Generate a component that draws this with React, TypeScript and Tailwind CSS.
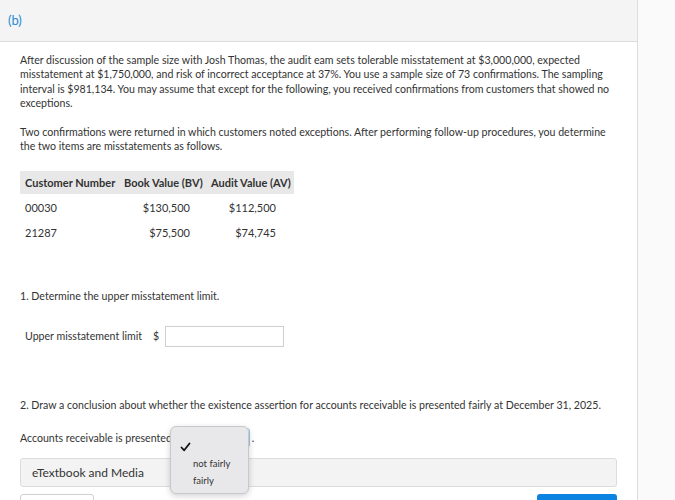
import React from 'react';

const rows = [
  { id: '00030', bv: '$130,500', av: '$112,500' },
  { id: '21287', bv: '$75,500', av: '$74,745' },
];

const App: React.FC = () => {
  return (
    <div className="flex h-[500px] w-[675px] overflow-hidden bg-[#fafafa] text-[#333] font-['Lato','Liberation_Sans',sans-serif]">
      {/* Question panel */}
      <div className="flex w-[638px] shrink-0 flex-col border-r border-[#dcdcdc] bg-white">
        <header className="flex h-[42px] shrink-0 items-center border-b border-[#dcdcdc] bg-[#f4f4f4] px-[8px]">
          <span className="text-[13px] text-[#1f8ad6]">(b)</span>
        </header>

        <div className="flex flex-col px-[20px] pt-[11px] text-[10.6px] leading-[14.4px]">
          <p>
            After discussion of the sample size with Josh Thomas, the audit eam sets tolerable misstatement at $3,000,000, expected
            misstatement at $1,750,000, and risk of incorrect acceptance at 37%. You use a sample size of 73 confirmations. The sampling
            interval is $981,134. You may assume that except for the following, you received confirmations from customers that showed no
            exceptions.
          </p>

          <p className="mt-[14px]">
            Two confirmations were returned in which customers noted exceptions. After performing follow-up procedures, you determine
            the two items are misstatements as follows.
          </p>

          {/* Misstatement table */}
          <table className="mt-[18px] w-[274px] table-fixed border-collapse text-[11px]">
            <colgroup>
              <col className="w-[99px]" />
              <col className="w-[87px]" />
              <col className="w-[88px]" />
            </colgroup>
            <thead>
              <tr className="h-[23px] bg-[#e8e8e8]">
                <th className="whitespace-nowrap pl-[5px] text-left font-bold">Customer Number</th>
                <th className="whitespace-nowrap pl-[5px] text-left font-bold">Book Value (BV)</th>
                <th className="whitespace-nowrap pl-[5px] text-left font-bold">Audit Value (AV)</th>
              </tr>
            </thead>
            <tbody>
              {rows.map(r => (
                <tr key={r.id} className="h-[25px]">
                  <td className="pl-[5px] pt-[2px]">{r.id}</td>
                  <td className="pr-[16px] pt-[2px] text-right">{r.bv}</td>
                  <td className="pr-[18px] pt-[2px] text-right">{r.av}</td>
                </tr>
              ))}
            </tbody>
          </table>

          <p className="mt-[45px]">1. Determine the upper misstatement limit.</p>

          <div className="mt-[22px] flex items-center pl-[5px]">
            <span>Upper misstatement limit</span>
            <span className="ml-[11px]">$</span>
            <input className="ml-[6px] h-[21px] w-[119px] border border-[#cfcfcf] bg-white outline-none" />
          </div>

          <p className="mt-[51px]">
            2. Draw a conclusion about whether the existence assertion for accounts receivable is presented fairly at December 31, 2025.
          </p>

          <div className="relative mt-[16px] flex h-[20px] items-center">
            <span className="whitespace-nowrap">Accounts receivable is presented</span>
            <span className="ml-[2px] h-[20px] w-[76px] rounded-[3px] border border-[#9fc6ea]" />
            <span className="ml-[2px]">.</span>

            {/* Open select menu */}
            <div className="absolute left-[150px] top-[-2px] z-10 flex w-[79px] flex-col rounded-[6px] border border-[#c8c8cc] bg-[#e8e8ea] pb-[4px] pt-[11px] text-[9.5px] shadow-[0_2px_6px_rgba(0,0,0,0.18)]">
              <div className="flex h-[17px] items-center pl-[9px]">
                <svg width="11" height="10" viewBox="0 0 11 10">
                  <path d="M1.5 5.5 L4.2 8.3 L9.5 1.5" fill="none" stroke="#111" strokeWidth="1.8" strokeLinecap="round" strokeLinejoin="round" />
                </svg>
              </div>
              <div className="flex h-[17px] items-center pl-[22px]">not fairly</div>
              <div className="flex h-[17px] items-center pl-[22px]">fairly</div>
            </div>
          </div>

          <div className="mt-[10px] flex h-[29px] items-center rounded-[3px] border border-[#dcdcdc] bg-[#f3f3f3] px-[11px] text-[12px]">
            eTextbook and Media
          </div>

          <div className="mt-[7px] flex justify-between">
            <div className="h-[24px] w-[74px] rounded-[3px] border border-[#cfcfcf] bg-white" />
            <div className="h-[24px] w-[80px] rounded-[3px] bg-[#0a84e0]" />
          </div>
        </div>
      </div>

      {/* Side panel */}
      <div className="flex-1 bg-[#fafafa]" />
    </div>
  );
};

export default App;
